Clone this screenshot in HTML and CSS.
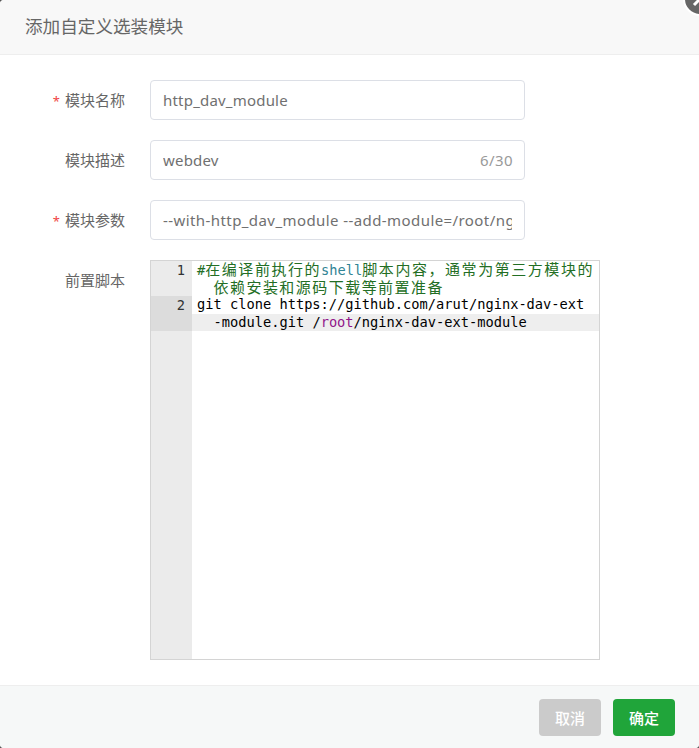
FILE: index.html
```html
<!DOCTYPE html>
<html lang="zh-CN">
<head>
<meta charset="utf-8">
<title>添加自定义选装模块</title>
<link rel="stylesheet" href="styles.css">
</head>
<body>
<div class="modal">
  <header class="modal-head">添加自定义选装模块</header>
  <button class="close" type="button" aria-label="关闭">
    <svg viewBox="0 0 30 30" width="30" height="30"><path d="M9 9L21 21M21 9L9 21" stroke="#fff" stroke-width="3" fill="none"/></svg>
  </button>
  <main class="modal-body">
    <div class="row">
      <label class="label"><span class="req">*</span>模块名称</label>
      <div class="field"><input class="input" value="http_dav_module"></div>
    </div>
    <div class="row">
      <label class="label">模块描述</label>
      <div class="field with-count"><input class="input" value="webdev"><span class="count">6/30</span></div>
    </div>
    <div class="row">
      <label class="label"><span class="req">*</span>模块参数</label>
      <div class="field"><input class="input input-long" value="--with-http_dav_module --add-module=/root/nginx-dav-ext-module"></div>
    </div>
    <div class="row">
      <label class="label">前置脚本</label>
      <div class="editor">
        <div class="gutter">
          <div class="gutter-cell">1</div>
          <div class="gutter-cell active">2</div>
        </div>
        <div class="code">
          <div class="line cm first"><span>#</span><span class="cjk">在编译前执行的</span><span class="kw">shell</span><span class="cjk">脚本内容，通常为第三方模块的</span></div>
          <div class="line cm wrap"><span class="cjk">依赖安装和源码下载等前置准备</span></div>
          <div class="line">git clone https://github.com/arut/nginx-dav-ext</div>
          <div class="line wrap active-line">-module.git /<span class="root">root</span>/nginx-dav-ext-module</div>
        </div>
      </div>
    </div>
  </main>
  <footer class="modal-foot">
    <button class="btn btn-off" type="button">取消</button>
    <button class="btn btn-ok" type="button">确定</button>
  </footer>
</div>
</body>
</html>
```
FILE: styles.css
```css
* { box-sizing: border-box; }
html, body { height: 100%; }
body {
  margin: 0;
  background: #555;
  font-family: "Noto Sans", "Noto Sans CJK SC", sans-serif;
  overflow: hidden;
}
.modal {
  position: relative;
  height: 748px;
  display: flex;
  flex-direction: column;
  background: #fff;
  border-radius: 4px;
}
.modal-head {
  height: 55px;
  flex: none;
  padding-left: 25px;
  line-height: 53px;
  font-size: 17.6px;
  color: #666;
  background: #f8f8f8;
  border-bottom: 1px solid #eee;
  border-radius: 4px 4px 0 0;
}
.close {
  position: absolute;
  top: -18px;
  right: -18px;
  width: 34px;
  height: 34px;
  padding: 0;
  border: 2px solid #fff;
  border-radius: 50%;
  background: #666;
  display: flex;
  align-items: center;
  justify-content: center;
}
.modal-body {
  flex: 1;
  padding-top: 25px;
  display: flex;
  flex-direction: column;
  gap: 20px;
}
.row { display: flex; align-items: flex-start; }
.label {
  width: 125px;
  flex: none;
  margin-right: 25px;
  height: 40px;
  line-height: 40px;
  text-align: right;
  font-size: 15px;
  color: #666;
}
.req {
  color: #f04444;
  font-size: 13px;
  margin-right: 5px;
}
.field {
  position: relative;
  width: 375px;
  height: 40px;
}
.input {
  width: 100%;
  height: 40px;
  padding: 0 12px;
  border: 1px solid #dcdfe6;
  border-radius: 4px;
  background: #fff;
  color: #707070;
  font: 15px "Noto Sans", "Noto Sans CJK SC", sans-serif;
  letter-spacing: 0.2px;
  outline: none;
}
.input-long { letter-spacing: 0.42px; }
.with-count .input { padding-right: 50px; }
.count {
  position: absolute;
  right: 12px;
  top: 0;
  line-height: 40px;
  font-size: 15px;
  letter-spacing: 0.4px;
  color: #999;
}
.editor {
  width: 450px;
  height: 400px;
  display: flex;
  border: 1px solid #d4d4d4;
  font-family: "DejaVu Sans Mono", "Noto Sans CJK SC", monospace;
  font-size: 13.7px;
  line-height: 17.5px;
  color: #000;
}
.gutter {
  width: 41px;
  flex: none;
  background: #ebebeb;
  color: #333;
}
.gutter-cell {
  height: 35px;
  padding: 1px 7px 0 0;
  text-align: right;
}
.gutter-cell.active { background: #dcdcdc; }
.code { flex: 1; min-width: 0; white-space: nowrap; }
.line { height: 17.5px; padding-left: 5px; }
.wrap { padding-left: 21.5px; }
.cm { color: #236e24; line-height: 15px; }
.kw { color: #318495; }
.root { color: #91168a; }
.cjk {
  display: inline-block;
  line-height: 15px;
  font-family: "Noto Sans CJK SC", sans-serif;
  font-size: 15px;
  letter-spacing: 1.46px;
}
.first .cjk { letter-spacing: 1.55px; }
.active-line { background: #eee; }
.modal-foot {
  height: 63px;
  flex: none;
  display: flex;
  justify-content: flex-end;
  align-items: flex-start;
  gap: 12px;
  padding: 13px 24px 0 0;
  background: #f6f8f8;
  border-top: 1px solid #eee;
  border-radius: 0 0 4px 4px;
}
.btn {
  width: 62px;
  height: 37px;
  padding: 0;
  border: none;
  border-radius: 4px;
  color: #fff;
  font: 500 15px "Noto Sans CJK SC", sans-serif;
}
.btn-off { background: #cbcbcb; }
.btn-ok { background: #20a53a; }
```
